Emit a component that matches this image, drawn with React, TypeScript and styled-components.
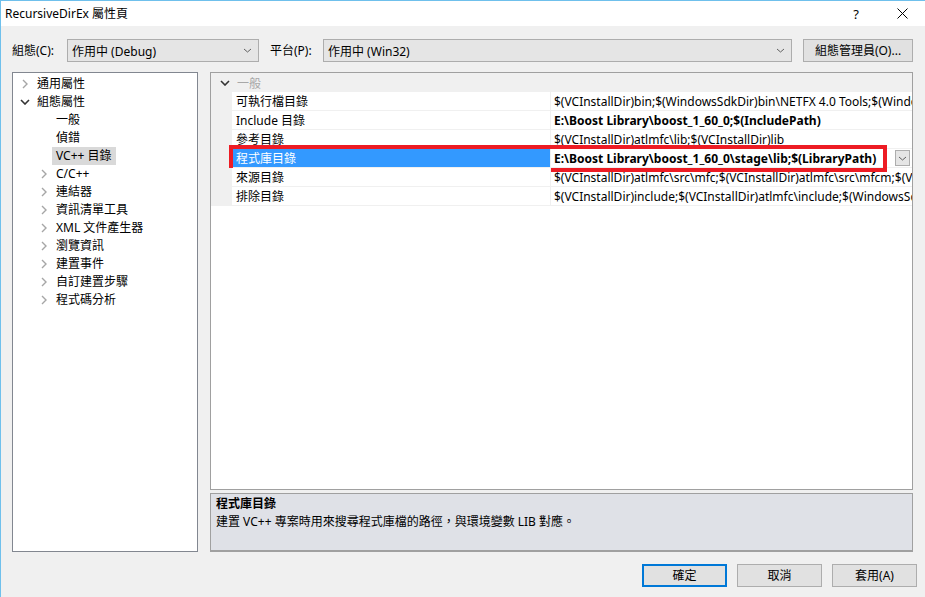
import React from "react";
import styled, { createGlobalStyle } from "styled-components";

const FONT = '"Segoe UI", "Noto Sans", "Noto Sans CJK TC", sans-serif';

const Global = createGlobalStyle`
  html, body { margin: 0; padding: 0; background: #f0f0f0; }
  body { font-family: ${FONT}; font-size: 12px; color: #000; }
  * { box-sizing: border-box; }
`;

const Window = styled.div`
  width: 925px;
  height: 597px;
  background: #f0f0f0;
  border-top: 1px solid #6fc0ec;
  border-left: 1px solid #6fc0ec;
  display: flex;
  flex-direction: column;
  overflow: hidden;
`;

const TitleBar = styled.div`
  height: 25px;
  background: #fff;
  display: flex;
  align-items: center;
  padding-left: 4px;
`;

const TitleText = styled.div`
  flex: 1;
  font-size: 12px;
  line-height: 16px;
`;

const TitleButton = styled.div`
  width: 46px;
  height: 25px;
  display: flex;
  align-items: center;
  justify-content: center;
  font-size: 13px;
  color: #000;
`;

const Toolbar = styled.div`
  display: flex;
  align-items: center;
  margin-top: 13px;
  height: 23px;
  padding-left: 11px;
`;

const Label = styled.div<{ $w: number; $ml?: number }>`
  width: ${(p) => p.$w}px;
  margin-left: ${(p) => p.$ml ?? 0}px;
  line-height: 16px;
`;

const Combo = styled.div<{ $w: number }>`
  width: ${(p) => p.$w}px;
  height: 23px;
  background: #e5e5e5;
  border: 1px solid #adadad;
  display: flex;
  align-items: center;
  padding: 0 6px 0 4px;
  justify-content: space-between;
`;

const Button = styled.div<{ $w: number; $default?: boolean; $ml?: number }>`
  width: ${(p) => p.$w}px;
  height: 23px;
  margin-left: ${(p) => p.$ml ?? 0}px;
  background: #e1e1e1;
  border: ${(p) => (p.$default ? "2px solid #0078d7" : "1px solid #adadad")};
  display: flex;
  align-items: center;
  justify-content: center;
  line-height: 16px;
`;

const Main = styled.div`
  display: flex;
  margin-top: 10px;
  padding-left: 11px;
  gap: 12px;
  height: 480px;
`;

const Tree = styled.div`
  width: 186px;
  height: 480px;
  background: #fff;
  border: 1px solid #828790;
  padding-top: 2px;
  display: flex;
  flex-direction: column;
`;

const TreeRow = styled.div<{ $level: number }>`
  height: 18px;
  display: flex;
  align-items: center;
  padding-left: ${(p) => 4 + p.$level * 19}px;
`;

const Expander = styled.div`
  width: 16px;
  height: 18px;
  display: flex;
  align-items: center;
  justify-content: center;
`;

const TreeLabel = styled.div<{ $selected?: boolean }>`
  height: 18px;
  line-height: 18px;
  padding: 0 4px;
  background: ${(p) => (p.$selected ? "#d9d9d9" : "transparent")};
`;

const RightCol = styled.div`
  width: 703px;
  display: flex;
  flex-direction: column;
  gap: 3px;
`;

const Grid = styled.div`
  height: 418px;
  background: #fff;
  border: 1px solid #a0a0a0;
  display: flex;
  flex-direction: column;
`;

const CategoryRow = styled.div`
  height: 19px;
  background: #f0f0f0;
  display: flex;
  align-items: center;
  color: #a8a8a8;
`;

const CategoryToggle = styled.div`
  width: 25px;
  display: flex;
  justify-content: center;
  padding-left: 2px;
`;

const CategoryLabel = styled.span`
  padding-left: 1px;
  padding-top: 1px;
`;

const PropRow = styled.div`
  position: relative;
  height: 19px;
  display: flex;
`;

const Gutter = styled.div`
  width: 21px;
  background: #f0f0f0;
`;

const NameCell = styled.div<{ $selected?: boolean }>`
  width: 319px;
  height: 19px;
  line-height: 18px;
  padding: 1px 0 0 4px;
  border-bottom: 1px solid #f0f0f0;
  border-right: 1px solid #f0f0f0;
  background: ${(p) => (p.$selected ? "#3399ff" : "#fff")};
  color: ${(p) => (p.$selected ? "#fff" : "#000")};
  white-space: nowrap;
  overflow: hidden;
`;

const ValueCell = styled.div<{ $bold?: boolean }>`
  flex: 1;
  min-width: 0;
  height: 19px;
  padding-left: 3px;
  border-bottom: 1px solid #f0f0f0;
  font-weight: ${(p) => (p.$bold ? 700 : 400)};
  white-space: nowrap;
  overflow: hidden;
  display: flex;
  align-items: center;
`;

const ValueText = styled.div`
  flex: 1;
  min-width: 0;
  line-height: 18px;
  padding-top: 1px;
  overflow: hidden;
`;

const DropButton = styled.div`
  width: 15px;
  height: 16px;
  margin-right: 2px;
  flex: none;
  background: #e5e5e5;
  border: 1px solid #adadad;
  display: flex;
  align-items: center;
  justify-content: center;
`;

const Highlight = styled.div`
  position: absolute;
  left: 18px;
  top: -4px;
  width: 658px;
  height: 27px;
  border: 4px solid #ed1c24;
  pointer-events: none;
`;

const Description = styled.div`
  height: 59px;
  background: #dfe1e7;
  border: 1px solid #a0a0a0;
  border-bottom: 2px solid #a0a0a0;
  padding: 1px 5px;
  line-height: 18px;
`;

const DescTitle = styled.div`
  font-weight: 700;
`;

const Footer = styled.div`
  display: flex;
  justify-content: flex-end;
  gap: 10px;
  margin-top: 12px;
  padding-right: 8px;
`;

const ChevronRight = ({ color = "#a6a6a6" }: { color?: string }) => (
  <svg width="6" height="10" viewBox="0 0 6 10">
    <path d="M1 1 L5 5 L1 9" fill="none" stroke={color} strokeWidth="1.4" />
  </svg>
);

const ChevronDown = ({ color = "#333", w = 10, h = 6, sw = 1.6 }: { color?: string; w?: number; h?: number; sw?: number }) => (
  <svg width={w} height={h} viewBox={`0 0 ${w} ${h}`}>
    <path d={`M1 1 L${w / 2} ${h - 1} L${w - 1} 1`} fill="none" stroke={color} strokeWidth={sw} />
  </svg>
);

type TreeItem = { label: string; level: number; exp?: "open" | "closed"; selected?: boolean };

const treeItems: TreeItem[] = [
  { label: "通用屬性", level: 0, exp: "closed" },
  { label: "組態屬性", level: 0, exp: "open" },
  { label: "一般", level: 1 },
  { label: "偵錯", level: 1 },
  { label: "VC++ 目錄", level: 1, selected: true },
  { label: "C/C++", level: 1, exp: "closed" },
  { label: "連結器", level: 1, exp: "closed" },
  { label: "資訊清單工具", level: 1, exp: "closed" },
  { label: "XML 文件產生器", level: 1, exp: "closed" },
  { label: "瀏覽資訊", level: 1, exp: "closed" },
  { label: "建置事件", level: 1, exp: "closed" },
  { label: "自訂建置步驟", level: 1, exp: "closed" },
  { label: "程式碼分析", level: 1, exp: "closed" },
];

type Prop = { name: string; value: string; bold?: boolean; selected?: boolean };

const props: Prop[] = [
  { name: "可執行檔目錄", value: "$(VCInstallDir)bin;$(WindowsSdkDir)bin\\NETFX 4.0 Tools;$(WindowsSdkDir)bin;$(VSInstallDir)Common7\\Tools\\bin" },
  { name: "Include 目錄", value: "E:\\Boost Library\\boost_1_60_0;$(IncludePath)", bold: true },
  { name: "參考目錄", value: "$(VCInstallDir)atlmfc\\lib;$(VCInstallDir)lib" },
  { name: "程式庫目錄", value: "E:\\Boost Library\\boost_1_60_0\\stage\\lib;$(LibraryPath)", bold: true, selected: true },
  { name: "來源目錄", value: "$(VCInstallDir)atlmfc\\src\\mfc;$(VCInstallDir)atlmfc\\src\\mfcm;$(VCInstallDir)atlmfc\\src\\atl" },
  { name: "排除目錄", value: "$(VCInstallDir)include;$(VCInstallDir)atlmfc\\include;$(WindowsSdkDir)include" },
];

export default function App() {
  return (
    <>
      <Global />
      <Window>
        <TitleBar>
          <TitleText>RecursiveDirEx 屬性頁</TitleText>
          <TitleButton>?</TitleButton>
          <TitleButton>
            <svg width="11" height="11" viewBox="0 0 11 11">
              <path d="M0.5 0.5 L10.5 10.5 M10.5 0.5 L0.5 10.5" stroke="#000" strokeWidth="1" />
            </svg>
          </TitleButton>
        </TitleBar>
        <Toolbar>
          <Label $w={55}>組態(C):</Label>
          <Combo $w={192}>
            <span>作用中 (Debug)</span>
            <ChevronDown color="#606060" w={9} h={5} sw={1} />
          </Combo>
          <Label $w={53} $ml={11}>平台(P):</Label>
          <Combo $w={469}>
            <span>作用中 (Win32)</span>
            <ChevronDown color="#606060" w={9} h={5} sw={1} />
          </Combo>
          <Button $w={110} $ml={11}>組態管理員(O)...</Button>
        </Toolbar>
        <Main>
          <Tree>
            {treeItems.map((t) => (
              <TreeRow key={t.label} $level={t.level}>
                <Expander>
                  {t.exp === "closed" && <ChevronRight />}
                  {t.exp === "open" && <ChevronDown />}
                </Expander>
                <TreeLabel $selected={t.selected}>{t.label}</TreeLabel>
              </TreeRow>
            ))}
          </Tree>
          <RightCol>
            <Grid>
              <CategoryRow>
                <CategoryToggle>
                  <ChevronDown />
                </CategoryToggle>
                <CategoryLabel>一般</CategoryLabel>
              </CategoryRow>
              {props.map((p) => (
                <PropRow key={p.name}>
                  <Gutter />
                  <NameCell $selected={p.selected}>{p.name}</NameCell>
                  <ValueCell $bold={p.bold}>
                    <ValueText>{p.value}</ValueText>
                    {p.selected && (
                      <DropButton>
                        <ChevronDown color="#606060" w={9} h={5} sw={1} />
                      </DropButton>
                    )}
                  </ValueCell>
                  {p.selected && <Highlight />}
                </PropRow>
              ))}
            </Grid>
            <Description>
              <DescTitle>程式庫目錄</DescTitle>
              <div>建置 VC++ 專案時用來搜尋程式庫檔的路徑，與環境變數 LIB 對應。</div>
            </Description>
          </RightCol>
        </Main>
        <Footer>
          <Button $w={85} $default>確定</Button>
          <Button $w={85}>取消</Button>
          <Button $w={85}>套用(A)</Button>
        </Footer>
      </Window>
    </>
  );
}
